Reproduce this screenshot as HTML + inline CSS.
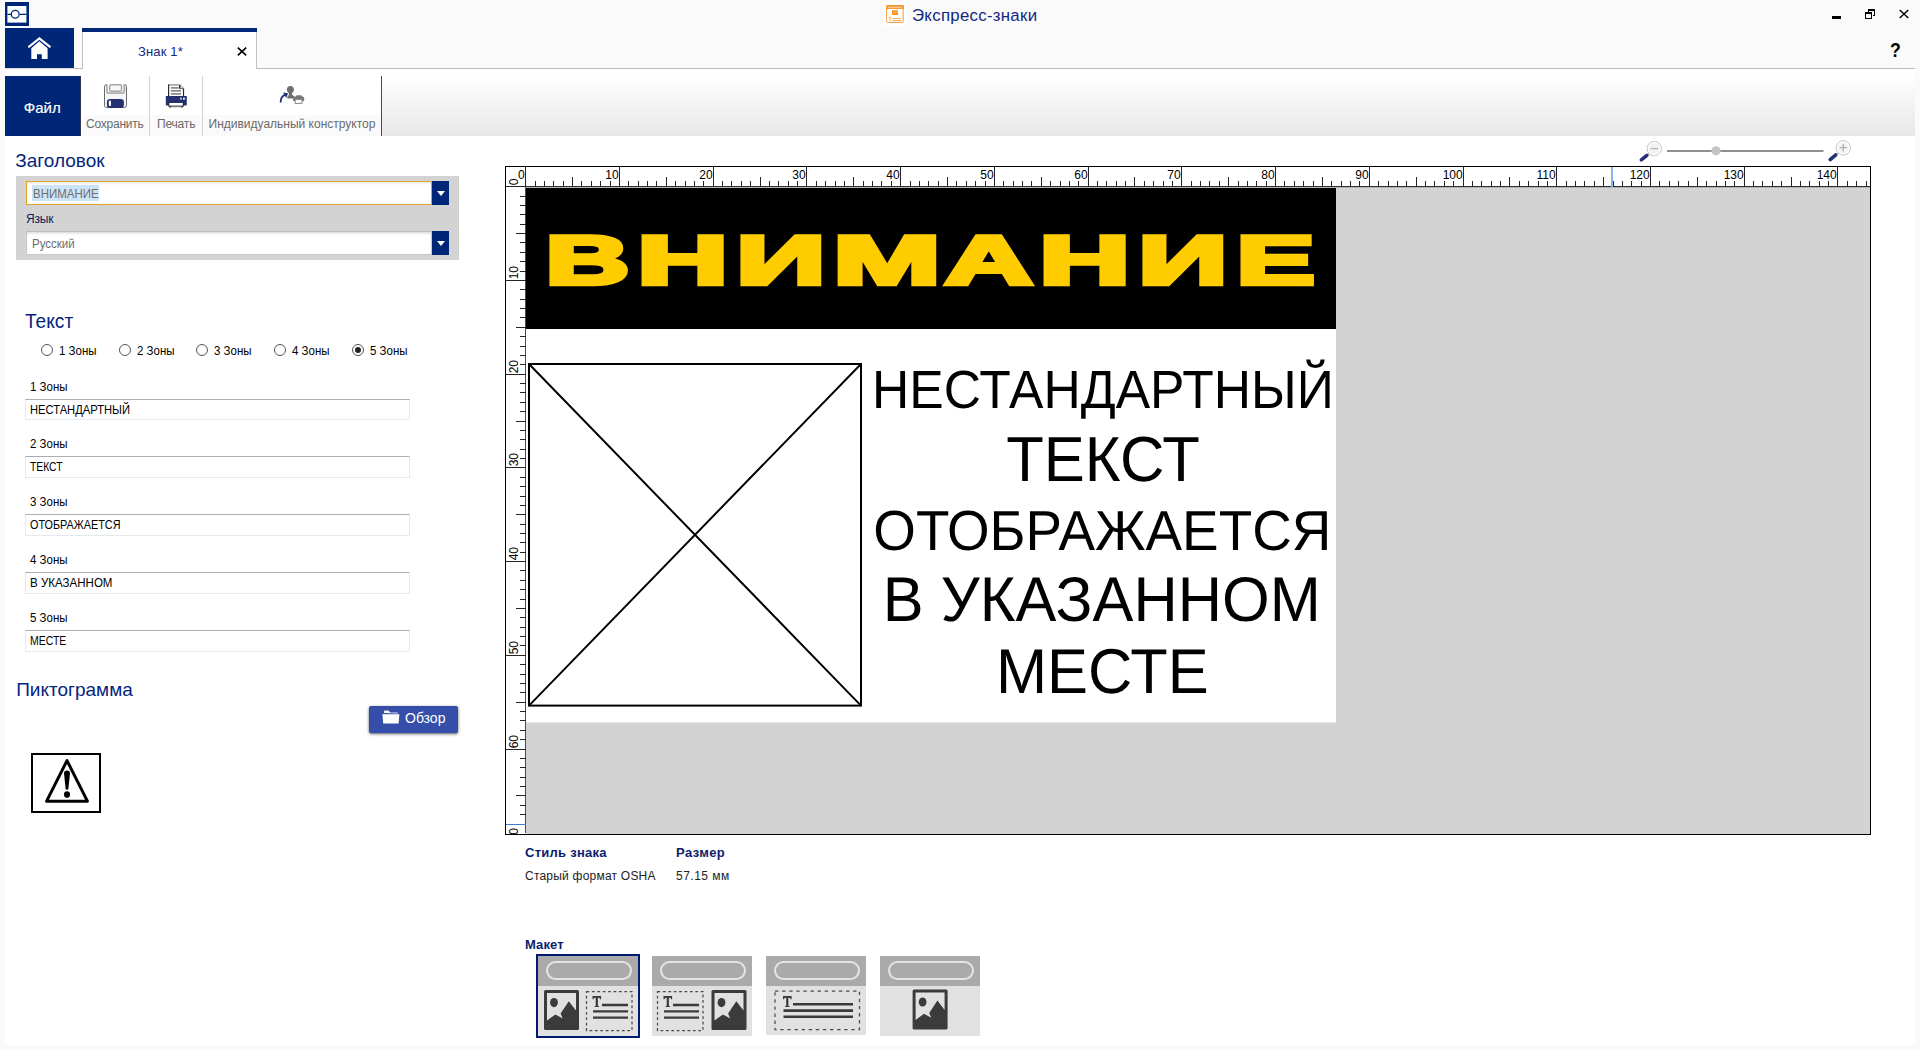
<!DOCTYPE html>
<html lang="ru">
<head>
<meta charset="utf-8">
<title>Экспресс-знаки</title>
<style>
*{box-sizing:border-box;margin:0;padding:0}
html,body{width:1920px;height:1050px;overflow:hidden}
body{position:relative;background:#fafafa;font-family:"Liberation Sans",sans-serif;font-size:12px;color:#000}
.abs{position:absolute}
.navy{background:#002677}
.t{position:absolute;white-space:nowrap;line-height:1}
.sx{display:inline-block;transform-origin:0 50%}
/* main white area */
#main{left:5px;top:69px;width:1910px;height:976px;background:#fff}
/* tab row */
#tabline{left:74px;top:68px;width:1841px;height:1px;background:#bcbcbc}
#tab{left:82px;top:28px;width:175px;height:41px;background:#fff;border-left:1px solid #c2c2c2;border-right:1px solid #c2c2c2}
#tabtop{left:82px;top:28px;width:175px;height:4px}
/* toolbar */
#tbgrad{left:382px;top:69px;width:1533px;height:67px;background:linear-gradient(#fff 0,#fdfdfd 18%,#f6f6f6 42%,#efefef 70%,#e8e8e8 100%)}
#tblab{left:82px;top:115px;width:299px;height:21px;background:#fafafa}
.vsep{position:absolute;top:76px;width:1px;height:60px;background:#d2d2d2}
.tbl{top:118px;color:#6a6a6a;font-size:12px}
/* left panel */
.h{color:#06247e;font-size:20px}
.inp{position:absolute;left:25px;width:385px;height:21px;background:#fff;border:1px solid #e3e9ef;border-top-color:#abadb3}
.inp span{position:absolute;left:4px;top:4px;line-height:12px;white-space:nowrap;font-size:12px}
.rad{position:absolute;top:344px;width:12px;height:12px;border:1px solid #555;border-radius:50%;background:#fff}
.rl{top:345px;font-size:12px}
.zl{left:30px;font-size:12px}
.cb{position:absolute;left:26px;width:406px;height:24px;background:#fff;box-shadow:inset 0 2px 3px -1px rgba(0,0,0,.18)}
.dd{position:absolute;left:432px;width:17px;height:24px}
.dd:after{content:"";position:absolute;left:5px;top:10px;border:4px solid transparent;border-top:5px solid #fff;border-bottom:0}
/* thumbnails */
.th{position:absolute;top:956px;width:100px;height:80px;background:#e1e1e1}
.th .hd{position:absolute;left:0;top:0;width:100px;height:30px;background:#aaa}
.th .pill{position:absolute;left:8px;top:5px;width:86px;height:19px;border:2px solid rgba(255,255,255,.68);border-radius:10px}
</style>
</head>
<body>

<!-- ===== title bar ===== -->
<svg class="abs" style="left:5px;top:2px" width="24" height="24" viewBox="0 0 24 24">
  <rect width="24" height="24" fill="#002677"/>
  <rect x="2.4" y="4" width="19" height="16.6" fill="#fff"/>
  <path d="M2.4 12.3H6M14.5 12.3H21.4" stroke="#002677" stroke-width="1.3"/>
  <circle cx="10.2" cy="12.3" r="3.9" fill="#fff" stroke="#002677" stroke-width="1.3"/>
</svg>
<div class="abs" style="left:883px;top:2px;width:24px;height:24px;background:#fff"></div>
<svg class="abs" style="left:886px;top:5px" width="18" height="18" viewBox="0 0 18 18">
  <rect x=".5" y=".5" width="17" height="17" rx="1.3" fill="#fff" stroke="#f6a24c"/>
  <path d="M0 4V1.4Q0 0 1.4 0H16.6Q18 0 18 1.4V4Z" fill="#f69a3a"/>
  <path d="M2.4 2.4H15.4" stroke="#fde3c8" stroke-width=".8"/>
  <rect x="15.9" y="4" width="1.6" height="13" fill="#fbd6ae"/>
  <rect x="6" y="5.2" width="6" height="4.9" rx=".6" fill="#f5921e"/>
  <path d="M7 8.6l2-1.8 1.2.8 1.2-1.4" stroke="#fbc793" stroke-width=".8" fill="none"/>
  <path d="M2.6 12.4H5.4M4 12.4V16.4" stroke="#f9bb7e" stroke-width="1"/>
  <path d="M6.4 13.5H15M6.4 15.6H15" stroke="#f8ad60" stroke-width="1.1"/>
</svg>
<div class="t" style="left:912px;top:7.7px;font-size:16.8px;color:#12277f;letter-spacing:.3px">Экспресс-знаки</div>
<!-- window controls -->
<div class="abs" style="left:1832px;top:16px;width:9px;height:3px;background:#000"></div>
<svg class="abs" style="left:1865px;top:9px" width="11" height="11" viewBox="0 0 11 11" shape-rendering="crispEdges" fill="none" stroke="#000">
  <path d="M3.5 3V1H9.5V6.5H7.5" stroke-width="1"/><path d="M3 .75H10" stroke-width="1.5"/>
  <rect x=".5" y="4" width="6" height="5.5" stroke-width="1"/><path d="M0 3.75H7" stroke-width="1.5"/>
</svg>
<svg class="abs" style="left:1899px;top:9px" width="10" height="10" viewBox="0 0 10 10" stroke="#000" stroke-width="1.5"><path d="M.8 1L9.2 9M9.2 1L.8 9"/></svg>
<div class="t" style="left:1890.2px;top:39.5px;font-size:20.5px;font-weight:700"><span class="sx" style="transform:scaleX(.86)">?</span></div>

<!-- ===== tab row ===== -->
<div class="abs navy" style="left:5px;top:28px;width:69px;height:40px"></div>
<svg class="abs" style="left:26px;top:35px" width="27" height="26" viewBox="0 0 27 26">
  <path d="M3.1 11.7L13.4 3.4L23.7 11.7" fill="none" stroke="#fff" stroke-width="2.2" stroke-linecap="round" stroke-linejoin="miter"/>
  <path d="M5.3 13.2L13.4 6.2L21.6 13.2V24H15.8V19.2H11V24H5.3Z" fill="#fff"/>
</svg>
<div class="abs" id="tabline"></div>
<div class="abs" style="left:5px;top:68px;width:69px;height:1px;background:#dcdad6"></div>
<div class="abs" id="tab"></div>
<div class="abs navy" id="tabtop"></div>
<div class="t" style="left:138px;top:45px;font-size:13px;color:#12277f;letter-spacing:.15px">Знак 1*</div>
<svg class="abs" style="left:237px;top:47px" width="10" height="9" viewBox="0 0 10 9" stroke="#000" stroke-width="1.6"><path d="M.8 .6L9.2 8.4M9.2 .6L.8 8.4"/></svg>

<!-- ===== main white & toolbar ===== -->
<div class="abs" id="main"></div>
<div class="abs" id="tbgrad"></div>
<div class="abs" id="tblab"></div>
<div class="abs navy" style="left:5px;top:76px;width:75px;height:60px"></div><div class="abs" style="left:80px;top:76px;width:1px;height:60px;background:#2b3350"></div>
<div class="t" style="left:23.8px;top:100px;font-size:15px;color:#fff;-webkit-text-stroke:.18px #fff">Файл</div>
<div class="vsep" style="left:149px"></div>
<div class="vsep" style="left:202px"></div>
<div class="abs" style="left:381px;top:76px;width:1px;height:60px;background:#4c4c4c"></div>
<!-- save icon -->
<svg class="abs" style="left:104px;top:84px" width="24" height="24" viewBox="0 0 24 24">
  <rect x=".5" y=".5" width="22" height="23" rx="2.2" fill="#f5f6fa" stroke="#6b6b6b" stroke-width="1"/>
  <rect x="3" y="0" width="17.2" height="1.4" fill="#fff"/>
  <path d="M2.9 .2V6.7Q2.9 9.1 5.3 9.1H17.9Q20.3 9.1 20.3 6.7V.2" fill="#fbfbfd" stroke="#b1b1b1" stroke-width="1.9"/>
  <rect x="5.7" y=".8" width="11.8" height="6.5" rx="1.3" fill="#f6f7fb" stroke="#a5a5a5" stroke-width="1.4"/>
  <rect x="2.9" y="15" width="17" height="9" rx="3.2" fill="#24306f"/>
  <rect x="4.8" y="16.5" width="2.2" height="5.7" rx="1.1" fill="#fff"/>
</svg>
<!-- printer icon -->
<svg class="abs" style="left:165px;top:84px" width="23" height="24" viewBox="0 0 23 24">
  <path d="M3.5 12.5V.8H14.8L18.6 4.6V12.5Z" fill="#fff"/>
  <path d="M3.4 .9H14.8" stroke="#9b9b9b" stroke-width="1.5"/>
  <path d="M14.8 .9L18.6 4.6" stroke="#8f8f8f" stroke-width="1.1"/>
  <path d="M14.7 1V4.7H18.4" fill="#e8e8e8" stroke="#6a6a6a" stroke-width="1"/>
  <path d="M14.7 1.2V4.4" stroke="#222" stroke-width="1.3"/>
  <path d="M3.6 .4V12.5M18.5 4.5V12.5" stroke="#2b2b2b" stroke-width="1.2"/>
  <path d="M6 3.9H13.6M6 6.9H16M6 9.9H16" stroke="#8c8c8c" stroke-width="1.8"/>
  <rect x=".8" y="12" width="21" height="9.4" rx=".6" fill="#24306f"/>
  <rect x="15" y="13.7" width="1.8" height="1.9" fill="#c5c9e3"/><rect x="18" y="13.7" width="1.8" height="1.9" fill="#fff"/>
  <path d="M3.6 18.6H18.5V21Q18.5 23.2 16.3 23.2H5.8Q3.6 23.2 3.6 21Z" fill="#fff"/>
  <path d="M5 22.3H17.2" stroke="#7b7b7b" stroke-width="1.9"/>
  <path d="M3.7 18.6V20.8Q3.7 23 5.9 23M18.4 18.6V20.8Q18.4 23 16.2 23" fill="none" stroke="#262626" stroke-width="1.2"/>
  <path d="M3.2 18.4H19" stroke="#161d52" stroke-width=".9"/>
</svg>
<!-- designer icon -->
<svg class="abs" style="left:278px;top:85px" width="28" height="21" viewBox="0 0 28 21">
  <circle cx="12.4" cy="4.4" r="3.5" fill="#6e6e6e"/>
  <path d="M10.4 6L14.4 6L13.9 9.4L17 12L14.6 13.5H9.4V11.8L10.9 10Z" fill="#6e6e6e"/>
  <path d="M2.6 17.6Q2.6 11 7.4 9.9" fill="none" stroke="#1f2f78" stroke-width="1.8"/>
  <path d="M5 7.6L10 8.3L8.3 13Z" fill="#1f2f78"/>
  <path d="M17.4 12L18.6 10.2H23.2L24.6 12Z" fill="#777"/>
  <rect x="15" y="11.8" width="11.2" height="4.4" rx="1.2" fill="#777"/>
  <rect x="17.2" y="14.4" width="6.8" height="4" fill="#fff" stroke="#8a8a8a" stroke-width="1"/>
</svg>
<div class="t tbl" style="left:86px;letter-spacing:-.22px">Сохранить</div>
<div class="t tbl" style="left:157px;letter-spacing:-.18px">Печать</div>
<div class="t tbl" style="left:208.5px">Индивидуальный конструктор</div>

<!-- ===== left panel ===== -->
<div class="t h" style="left:15.3px;top:150.9px;font-size:19px">Заголовок</div>
<div class="abs" style="left:16px;top:176px;width:443px;height:84px;background:#d3d3d3"></div>
<div class="cb" style="top:181px;border:1px solid #dfa723;box-shadow:inset 0 2px 3px -1px rgba(0,0,0,.12)"></div>
<div class="abs" style="left:32px;top:185px;width:67px;height:16px;background:#cde4f7"></div>
<div class="t" style="left:32.5px;top:187.6px;font-size:12px;color:#6d6d6d"><span class="sx" style="transform:scaleX(.957)">ВНИМАНИЕ</span></div>
<div class="dd navy" style="top:181px"></div>
<div class="t" style="left:26px;top:213px;font-size:12px;color:#0c1d5e;letter-spacing:-.2px">Язык</div>
<div class="cb" style="top:231px;border:1px solid #c9c9c9;border-top-color:#bdbdbd"></div>
<div class="t" style="left:32px;top:238px;font-size:12px;color:#6d6d6d"><span class="sx" style="transform:scaleX(.96)">Русский</span></div>
<div class="dd navy" style="top:231px"></div>

<div class="t h" style="left:24.8px;top:311px"><span class="sx" style="transform:scaleX(.957)">Текст</span></div>
<div class="rad" style="left:41px"></div><div class="t rl" style="left:59px"><span class="sx" style="transform:scaleX(.957)">1 Зоны</span></div>
<div class="rad" style="left:118.5px"></div><div class="t rl" style="left:136.5px"><span class="sx" style="transform:scaleX(.957)">2 Зоны</span></div>
<div class="rad" style="left:195.8px"></div><div class="t rl" style="left:213.8px"><span class="sx" style="transform:scaleX(.957)">3 Зоны</span></div>
<div class="rad" style="left:273.5px"></div><div class="t rl" style="left:291.5px"><span class="sx" style="transform:scaleX(.957)">4 Зоны</span></div>
<div class="rad" style="left:351.8px"></div><div class="t rl" style="left:370px"><span class="sx" style="transform:scaleX(.957)">5 Зоны</span></div>
<div class="abs" style="left:354.8px;top:347px;width:6px;height:6px;border-radius:50%;background:#222"></div>

<div class="t zl" style="top:381px"><span class="sx" style="transform:scaleX(.957)">1 Зоны</span></div>
<div class="inp" style="top:399px"><span class="sx" style="transform:scaleX(.931)">НЕСТАНДАРТНЫЙ</span></div>
<div class="t zl" style="top:438px"><span class="sx" style="transform:scaleX(.957)">2 Зоны</span></div>
<div class="inp" style="top:456px;height:22px"><span class="sx" style="transform:scaleX(.86)">ТЕКСТ</span></div>
<div class="t zl" style="top:496px"><span class="sx" style="transform:scaleX(.957)">3 Зоны</span></div>
<div class="inp" style="top:514px;height:22px"><span class="sx" style="transform:scaleX(.902)">ОТОБРАЖАЕТСЯ</span></div>
<div class="t zl" style="top:554px"><span class="sx" style="transform:scaleX(.957)">4 Зоны</span></div>
<div class="inp" style="top:572px;height:22px"><span class="sx" style="transform:scaleX(.962)">В УКАЗАННОМ</span></div>
<div class="t zl" style="top:612px"><span class="sx" style="transform:scaleX(.957)">5 Зоны</span></div>
<div class="inp" style="top:630px;height:22px"><span class="sx" style="transform:scaleX(.871)">МЕСТЕ</span></div>

<div class="t h" style="left:16.2px;top:679.8px;font-size:19px">Пиктограмма</div>
<div class="abs" style="left:369px;top:706px;width:89px;height:27px;background:#344eaa;border-radius:2px;box-shadow:0 1px 3px rgba(0,0,0,.65)"></div>
<svg class="abs" style="left:382px;top:710px" width="18" height="14" viewBox="0 0 18 14">
  <path d="M2 3V1.6Q2 .6 3 .6H6.4L8.4 2.4H15Q16 2.4 16 3.4Z" fill="#fff" opacity=".92"/>
  <path d="M.4 4.2H17.4L16.6 13.4H1.2Z" fill="#fff"/>
</svg>
<div class="t" style="left:405px;top:711px;font-size:14px;color:#fff">Обзор</div>
<div class="abs" style="left:31px;top:753px;width:70px;height:60px;border:2px solid #000;background:#fff"></div>
<svg class="abs" style="left:40px;top:755px" width="54" height="52" viewBox="0 0 54 52">
  <path d="M27 5.6L47.4 46.2H6.6Z" fill="none" stroke="#000" stroke-width="3" stroke-linejoin="round"/>
  <path d="M24 18.5Q24 15.6 27 15.6Q30 15.6 30 18.5L28.4 33.4Q28.2 34.8 27 34.8Q25.8 34.8 25.6 33.4Z" fill="#000"/>
  <ellipse cx="27" cy="39.6" rx="3" ry="3.3" fill="#000"/>
</svg>

<!-- ===== canvas + rulers ===== -->
<div class="abs" style="left:505px;top:166px;width:1366px;height:669px;background:#fff;border:1px solid #000"></div>
<div class="abs" style="left:526px;top:188px;width:1344px;height:646px;background:#d3d3d3"></div>
<div class="abs" style="left:526px;top:187px;width:1344px;height:1px;background:#b4b4b4"></div>
<!-- sign -->
<div class="abs" style="left:526px;top:188px;width:810px;height:534px;background:#fff"></div>
<div class="abs" style="left:526px;top:188px;width:810px;height:141px;background:#000"></div>
<div class="abs" style="left:526px;top:722px;width:810px;height:1px;background:#e8e8e8"></div>
<svg class="abs" style="left:0;top:0" width="1920" height="1050" viewBox="0 0 1920 1050" font-family="Liberation Sans, sans-serif">
  <g font-size="69.2" font-weight="700" text-rendering="geometricPrecision" fill="#fc0" stroke="#fc0" stroke-width="4.5" stroke-linejoin="miter"><text transform="translate(545.60 283.5) scale(1.6787 1)">В</text><text transform="translate(637.30 283.5) scale(1.8171 1)">Н</text><text transform="translate(736.35 283.5) scale(1.7951 1)">И</text><text transform="translate(833.25 283.5) scale(1.8628 1)">М</text><text transform="translate(944.76 283.5) scale(1.7597 1)">А</text><text transform="translate(1039.30 283.5) scale(1.8171 1)">Н</text><text transform="translate(1138.36 283.5) scale(1.7951 1)">И</text><text transform="translate(1236.55 283.5) scale(1.6955 1)">Е</text></g>
  <rect x="529" y="364" width="332" height="341.6" fill="#fff" stroke="#000" stroke-width="2"/>
  <path d="M529 364L861 705.6M861 364L529 705.6" stroke="#000" stroke-width="2"/>
  <g text-anchor="middle" fill="#000" text-rendering="geometricPrecision">
    <text transform="translate(1102.9 408) scale(1 1.04)" font-size="51.6">НЕСТАНДАРТНЫЙ</text>
    <text transform="translate(1103 480.7) scale(1 1.035)" font-size="61.5">ТЕКСТ</text>
    <text transform="translate(1102.3 550) scale(1 1.03)" font-size="54.8">ОТОБРАЖАЕТСЯ</text>
    <text transform="translate(1101.8 621.2) scale(1 1.03)" font-size="61.3">В УКАЗАННОМ</text>
    <text transform="translate(1102.4 692.5) scale(1 1.03)" font-size="61.4">МЕСТЕ</text>
  </g>
  <!-- rulers -->
  <g stroke="#262626" stroke-width="1" shape-rendering="crispEdges" fill="none">
    <path d="M506 186.5H1870" stroke="#2e2e2e"/>
    <path d="M525.5 167V187" stroke="#000"/>
    <path d="M525.5 187V833" stroke="#4a4a4a"/>
    <path d="M525.5 167V187 M535.5 181V187 M544.5 181V187 M553.5 181V187 M563.5 181V187 M572.5 177V187 M581.5 181V187 M591.5 181V187 M600.5 181V187 M610.5 181V187 M619.5 167V187 M628.5 181V187 M638.5 181V187 M647.5 181V187 M656.5 181V187 M666.5 177V187 M675.5 181V187 M685.5 181V187 M694.5 181V187 M703.5 181V187 M713.5 167V187 M722.5 181V187 M731.5 181V187 M741.5 181V187 M750.5 181V187 M760.5 177V187 M769.5 181V187 M778.5 181V187 M788.5 181V187 M797.5 181V187 M806.5 167V187 M816.5 181V187 M825.5 181V187 M835.5 181V187 M844.5 181V187 M853.5 177V187 M863.5 181V187 M872.5 181V187 M881.5 181V187 M891.5 181V187 M900.5 167V187 M910.5 181V187 M919.5 181V187 M928.5 181V187 M938.5 181V187 M947.5 177V187 M956.5 181V187 M966.5 181V187 M975.5 181V187 M985.5 181V187 M994.5 167V187 M1003.5 181V187 M1013.5 181V187 M1022.5 181V187 M1031.5 181V187 M1041.5 177V187 M1050.5 181V187 M1060.5 181V187 M1069.5 181V187 M1078.5 181V187 M1088.5 167V187 M1097.5 181V187 M1106.5 181V187 M1116.5 181V187 M1125.5 181V187 M1134.5 177V187 M1144.5 181V187 M1153.5 181V187 M1163.5 181V187 M1172.5 181V187 M1181.5 167V187 M1191.5 181V187 M1200.5 181V187 M1209.5 181V187 M1219.5 181V187 M1228.5 177V187 M1238.5 181V187 M1247.5 181V187 M1256.5 181V187 M1266.5 181V187 M1275.5 167V187 M1284.5 181V187 M1294.5 181V187 M1303.5 181V187 M1313.5 181V187 M1322.5 177V187 M1331.5 181V187 M1341.5 181V187 M1350.5 181V187 M1359.5 181V187 M1369.5 167V187 M1378.5 181V187 M1388.5 181V187 M1397.5 181V187 M1406.5 181V187 M1416.5 177V187 M1425.5 181V187 M1434.5 181V187 M1444.5 181V187 M1453.5 181V187 M1463.5 167V187 M1472.5 181V187 M1481.5 181V187 M1491.5 181V187 M1500.5 181V187 M1509.5 177V187 M1519.5 181V187 M1528.5 181V187 M1538.5 181V187 M1547.5 181V187 M1556.5 167V187 M1566.5 181V187 M1575.5 181V187 M1584.5 181V187 M1594.5 181V187 M1603.5 177V187 M1613.5 181V187 M1622.5 181V187 M1631.5 181V187 M1641.5 181V187 M1650.5 167V187 M1659.5 181V187 M1669.5 181V187 M1678.5 181V187 M1688.5 181V187 M1697.5 177V187 M1706.5 181V187 M1716.5 181V187 M1725.5 181V187 M1734.5 181V187 M1744.5 167V187 M1753.5 181V187 M1762.5 181V187 M1772.5 181V187 M1781.5 181V187 M1791.5 177V187 M1800.5 181V187 M1809.5 181V187 M1819.5 181V187 M1828.5 181V187 M1837.5 167V187 M1847.5 181V187 M1856.5 181V187 M1866.5 181V187"/>
    <path d="M506 186.5H526 M520 196.5H526 M520 205.5H526 M520 214.5H526 M520 224.5H526 M516 233.5H526 M520 242.5H526 M520 252.5H526 M520 261.5H526 M520 271.5H526 M506 280.5H526 M520 289.5H526 M520 299.5H526 M520 308.5H526 M520 317.5H526 M516 327.5H526 M520 336.5H526 M520 346.5H526 M520 355.5H526 M520 364.5H526 M506 374.5H526 M520 383.5H526 M520 392.5H526 M520 402.5H526 M520 411.5H526 M516 421.5H526 M520 430.5H526 M520 439.5H526 M520 449.5H526 M520 458.5H526 M506 467.5H526 M520 477.5H526 M520 486.5H526 M520 496.5H526 M520 505.5H526 M516 514.5H526 M520 524.5H526 M520 533.5H526 M520 542.5H526 M520 552.5H526 M506 561.5H526 M520 570.5H526 M520 580.5H526 M520 589.5H526 M520 599.5H526 M516 608.5H526 M520 617.5H526 M520 627.5H526 M520 636.5H526 M520 645.5H526 M506 655.5H526 M520 664.5H526 M520 674.5H526 M520 683.5H526 M520 692.5H526 M516 702.5H526 M520 711.5H526 M520 720.5H526 M520 730.5H526 M520 739.5H526 M506 749.5H526 M520 758.5H526 M520 767.5H526 M520 777.5H526 M520 786.5H526 M516 795.5H526 M520 805.5H526 M520 814.5H526 M520 824.5H526"/>
  </g>
  <path d="M1612 167V187" stroke="#8bb5f1" stroke-width="2" shape-rendering="crispEdges"/>
  <path d="M506 824.5H526" stroke="#3f7fd6" stroke-width="1" shape-rendering="crispEdges"/>
  <clipPath id="rc"><rect x="506" y="167" width="1364" height="667"/></clipPath>
  <g font-size="12" fill="#000" clip-path="url(#rc)">
<text x="524.7" y="179" text-anchor="end">0</text>
<text x="618.7" y="179" text-anchor="end">10</text>
<text x="712.7" y="179" text-anchor="end">20</text>
<text x="805.7" y="179" text-anchor="end">30</text>
<text x="899.7" y="179" text-anchor="end">40</text>
<text x="993.7" y="179" text-anchor="end">50</text>
<text x="1087.7" y="179" text-anchor="end">60</text>
<text x="1180.7" y="179" text-anchor="end">70</text>
<text x="1274.7" y="179" text-anchor="end">80</text>
<text x="1368.7" y="179" text-anchor="end">90</text>
<text x="1462.7" y="179" text-anchor="end">100</text>
<text x="1555.7" y="179" text-anchor="end">110</text>
<text x="1649.7" y="179" text-anchor="end">120</text>
<text x="1743.7" y="179" text-anchor="end">130</text>
<text x="1836.7" y="179" text-anchor="end">140</text>
<text transform="translate(518 185.3) rotate(-90)" text-anchor="start">0</text>
<text transform="translate(518 279.3) rotate(-90)" text-anchor="start">10</text>
<text transform="translate(518 373.3) rotate(-90)" text-anchor="start">20</text>
<text transform="translate(518 466.3) rotate(-90)" text-anchor="start">30</text>
<text transform="translate(518 560.3) rotate(-90)" text-anchor="start">40</text>
<text transform="translate(518 654.3) rotate(-90)" text-anchor="start">50</text>
<text transform="translate(518 748.3) rotate(-90)" text-anchor="start">60</text>
<text transform="translate(518 841.3) rotate(-90)" text-anchor="start">70</text>
  </g>
  <!-- zoom slider -->
  <path d="M1667 151H1823.5" stroke="#8f8f8f" stroke-width="2"/>
  <circle cx="1716" cy="150.8" r="4.6" fill="#c4c4c4"/>
  <g>
    <path d="M1647.6 155.2L1650 153.2" stroke="#c9c9c9" stroke-width="1.6"/>
    <path d="M1641.3 159.8L1646.9 155.3" stroke="#24307a" stroke-width="3.5" stroke-linecap="round"/>
    <circle cx="1654.3" cy="148.6" r="7.2" fill="#fff" stroke="#c5c5c5" stroke-width="1"/>
    <circle cx="1654.3" cy="148.6" r="5.5" fill="#f3f3f3"/>
    <path d="M1650.6 148.6H1658" stroke="#b4b4b4" stroke-width="1.3"/>
  </g>
  <g>
    <path d="M1836.4 154.4L1838.8 152.4" stroke="#c9c9c9" stroke-width="1.6"/>
    <path d="M1830.2 159.6L1835.8 154.8" stroke="#24307a" stroke-width="3.5" stroke-linecap="round"/>
    <circle cx="1843.3" cy="147.8" r="7.2" fill="#fff" stroke="#c5c5c5" stroke-width="1"/>
    <circle cx="1843.3" cy="147.8" r="5.5" fill="#f3f3f3"/>
    <path d="M1839.6 147.6H1847M1843.3 144V151.4" stroke="#b0b0b0" stroke-width="1.3"/>
  </g>
</svg>

<!-- ===== info ===== -->
<div class="t" style="left:525px;top:846px;font-size:13px;font-weight:700;color:#0c1d6e;letter-spacing:.26px">Стиль знака</div>
<div class="t" style="left:676px;top:846px;font-size:13px;font-weight:700;color:#0c1d6e;letter-spacing:.4px">Размер</div>
<div class="t" style="left:525px;top:870px;font-size:12px;color:#222;letter-spacing:.22px">Старый формат OSHA</div>
<div class="t" style="left:676px;top:870px;font-size:12px;color:#222;letter-spacing:.5px">57.15 мм</div>
<div class="t" style="left:525px;top:938px;font-size:13px;font-weight:700;color:#0c1d6e;letter-spacing:.1px">Макет</div>

<!-- ===== thumbnails ===== -->
<div class="abs" style="left:536px;top:954px;width:104px;height:84px;border:2px solid #001a6e"></div>
<div class="th" style="left:538px"><div class="hd"></div><div class="pill"></div></div>
<div class="th" style="left:652px"><div class="hd"></div><div class="pill"></div></div>
<div class="th" style="left:766px;height:79px"><div class="hd"></div><div class="pill"></div></div>
<div class="th" style="left:880px"><div class="hd"></div><div class="pill"></div></div>
<svg class="abs" style="left:0;top:0" width="1920" height="1050" viewBox="0 0 1920 1050">
  <defs>
    <g id="pic">
      <rect x="0" y="0" width="35" height="40" rx="1.5" fill="#3b3b3b"/>
      <path d="M3 3H32V20.5L24.8 11.2L16.6 23.6L18.6 28.4L11.4 24.4L3 30.6Z" fill="#e1e1e1"/>
      <ellipse cx="10" cy="12.6" rx="3.9" ry="4.6" fill="#3b3b3b"/>
    </g>
    <g id="tx" fill="#3b3b3b">
      <path d="M0 0H8.6V3.2H7.7Q7.5 1.7 6.2 1.7H5.4V9.4Q5.4 10.2 6.6 10.2V11H2V10.2Q3.2 10.2 3.2 9.4V1.7H2.4Q1.1 1.7 .9 3.2H0Z"/>
    </g>
  </defs>
  <!-- 1 -->
  <use href="#pic" x="544" y="990"/>
  <rect x="586.5" y="991.5" width="45.5" height="39" fill="none" stroke="#4b4b4b" stroke-width="1.25" stroke-dasharray="2.8 2.6"/>
  <use href="#tx" x="592.5" y="996"/>
  <path d="M602 1005H628M593 1011.4H628M593 1017.6H628" stroke="#3b3b3b" stroke-width="2.4"/>
  <!-- 2 -->
  <rect x="657.5" y="991.5" width="45.5" height="39" fill="none" stroke="#4b4b4b" stroke-width="1.25" stroke-dasharray="2.8 2.6"/>
  <use href="#tx" x="663.5" y="996"/>
  <path d="M673 1005H699M664 1011.4H699M664 1017.6H699" stroke="#3b3b3b" stroke-width="2.4"/>
  <use href="#pic" x="711.5" y="990"/>
  <!-- 3 -->
  <rect x="775" y="991" width="84.5" height="38.5" fill="none" stroke="#4b4b4b" stroke-width="1.25" stroke-dasharray="3.4 3.7"/>
  <use href="#tx" x="783" y="996"/>
  <path d="M793 1004.2H853M783.5 1010.6H853M783.5 1016.8H853" stroke="#3b3b3b" stroke-width="2.6"/>
  <!-- 4 -->
  <use href="#pic" x="912.6" y="989.4"/>
</svg>
</body>
</html>
